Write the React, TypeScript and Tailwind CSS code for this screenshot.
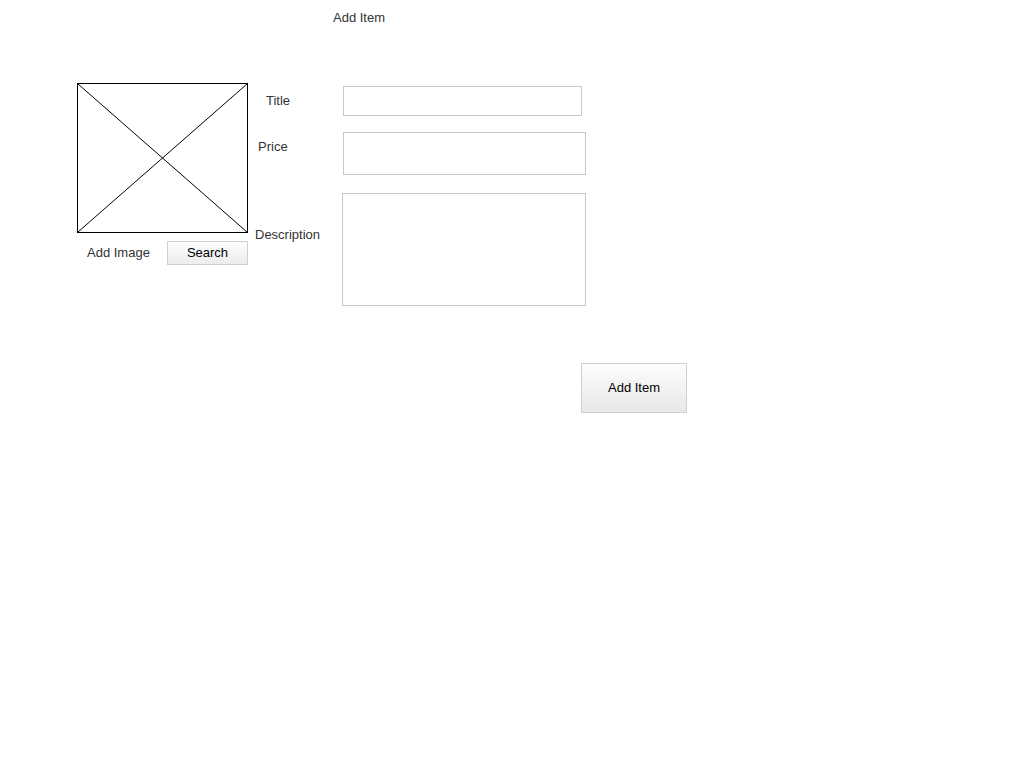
export default function App() {
  return (
    <div className="min-h-[768px] w-[1024px] bg-white text-[13px] leading-[15px] text-[#333] [font-family:'Liberation_Sans',Arial,sans-serif]">
      <div className="pl-[333px] pt-[10px]">Add Item</div>

      <div className="ml-[77px] mt-[58px] flex items-start">
        {/* image placeholder + search */}
        <div className="w-[171px]">
          <div className="h-[150px] w-[171px] border border-black">
            <svg className="h-full w-full" viewBox="0 0 100 100" preserveAspectRatio="none">
              <line x1="0" y1="0" x2="100" y2="100" stroke="#000" strokeWidth="1" vectorEffect="non-scaling-stroke" />
              <line x1="100" y1="0" x2="0" y2="100" stroke="#000" strokeWidth="1" vectorEffect="non-scaling-stroke" />
            </svg>
          </div>
          <div className="mt-[8px] flex items-center justify-between pl-[10px]">
            <span className="-mt-[2px]">Add Image</span>
            <button
              type="button"
              className="h-[24px] w-[81px] border border-[#cfcfcf] bg-gradient-to-b from-[#fdfdfd] to-[#ececec] pb-[1px] text-black"
            >
              Search
            </button>
          </div>
        </div>

        {/* labels */}
        <div className="flex w-[94px] flex-col items-start">
          <span className="ml-[18px] mt-[10px]">Title</span>
          <span className="ml-[10px] mt-[31px]">Price</span>
          <span className="ml-[7px] mt-[73px]">Description</span>
        </div>

        {/* inputs */}
        <div className="flex flex-col items-start">
          <input className="ml-[1px] mt-[3px] h-[30px] w-[239px] border border-[#c8c8c8] outline-none" />
          <input className="ml-[1px] mt-[16px] h-[43px] w-[243px] border border-[#c8c8c8] outline-none" />
          <textarea className="mt-[18px] h-[113px] w-[244px] resize-none border border-[#c8c8c8] outline-none" />
        </div>
      </div>

      <div className="ml-[581px] mt-[57px]">
        <button
          type="button"
          className="h-[50px] w-[106px] border border-[#cfcfcf] bg-gradient-to-b from-[#fdfdfd] to-[#e8e8e8] pb-[2px] text-black"
        >
          Add Item
        </button>
      </div>
    </div>
  );
}
